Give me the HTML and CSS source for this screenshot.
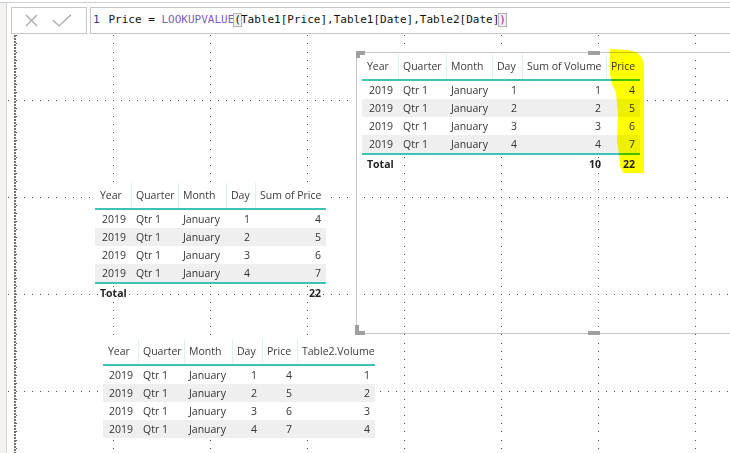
FILE: index.html
```html
<!DOCTYPE html>
<html>
<head>
<meta charset="utf-8">
<title>Power BI LOOKUPVALUE</title>
<link rel="stylesheet" href="styles.css">
</head>
<body>
<div class="app">
  <div class="side-strip"></div>
  <div class="main">
    <div class="formula-bar">
      <div class="fx-buttons">
        <svg class="icon-x" width="13" height="13" viewBox="0 0 13 13"><path d="M1 1 L12 12 M12 1 L1 12" fill="none" stroke="#a8a6a4" stroke-width="1.2"/></svg>
        <svg class="icon-check" width="20" height="13" viewBox="0 0 20 13"><path d="M0.8 6 L7 12 L19 0.8" fill="none" stroke="#a8a6a4" stroke-width="1.2"/></svg>
      </div>
      <div class="formula-input"><span class="ln">1</span><span class="code">Price = <span class="fn">LOOKUPVALUE</span><span class="bracket">(</span>Table1[Price],Table1[Date],Table2[Date]<span class="bracket close">)</span></span></div>
    </div>
    <div class="canvas">
      <svg class="grid" width="730" height="420">
        <defs>
          <pattern id="dots" x="9" y="-32" width="97" height="97" patternUnits="userSpaceOnUse">
            <rect x="0" y="0" width="1" height="1"/>
            <rect x="0" y="8" width="1" height="1"/>
            <rect x="0" y="16" width="1" height="1"/>
            <rect x="0" y="24" width="1" height="1"/>
            <rect x="0" y="32" width="1" height="1"/>
            <rect x="0" y="40" width="1" height="1"/>
            <rect x="0" y="49" width="1" height="1"/>
            <rect x="0" y="57" width="1" height="1"/>
            <rect x="0" y="65" width="1" height="1"/>
            <rect x="0" y="73" width="1" height="1"/>
            <rect x="0" y="81" width="1" height="1"/>
            <rect x="0" y="89" width="1" height="1"/>
            <rect x="8" y="0" width="1" height="1"/>
            <rect x="16" y="0" width="1" height="1"/>
            <rect x="24" y="0" width="1" height="1"/>
            <rect x="32" y="0" width="1" height="1"/>
            <rect x="40" y="0" width="1" height="1"/>
            <rect x="49" y="0" width="1" height="1"/>
            <rect x="57" y="0" width="1" height="1"/>
            <rect x="65" y="0" width="1" height="1"/>
            <rect x="73" y="0" width="1" height="1"/>
            <rect x="81" y="0" width="1" height="1"/>
            <rect x="89" y="0" width="1" height="1"/>
          </pattern>
        </defs>
        <rect x="0" y="0" width="730" height="420" fill="url(#dots)"/>
      </svg>
      <div class="page-edge"></div>

      <div class="visual-frame">
        <table class="tbl tbl-a">
          <colgroup><col class="a1"><col class="a2"><col class="a3"><col class="a4"><col class="a5"><col class="a6"></colgroup>
          <thead><tr><th>Year</th><th>Quarter</th><th>Month</th><th>Day</th><th>Sum of Volume</th><th>Price</th></tr></thead>
          <tbody>
            <tr><td class="num">2019</td><td>Qtr 1</td><td>January</td><td class="num">1</td><td class="num">1</td><td class="num">4</td></tr>
            <tr><td class="num">2019</td><td>Qtr 1</td><td>January</td><td class="num">2</td><td class="num">2</td><td class="num">5</td></tr>
            <tr><td class="num">2019</td><td>Qtr 1</td><td>January</td><td class="num">3</td><td class="num">3</td><td class="num">6</td></tr>
            <tr><td class="num">2019</td><td>Qtr 1</td><td>January</td><td class="num">4</td><td class="num">4</td><td class="num">7</td></tr>
          </tbody>
          <tfoot><tr><td>Total</td><td></td><td></td><td></td><td class="num">10</td><td class="num">22</td></tr></tfoot>
        </table>
        <span class="handle h-tl-a"></span><span class="handle h-tl-b"></span>
        <span class="handle h-tm"></span>
        <span class="handle h-bl-a"></span><span class="handle h-bl-b"></span>
        <span class="handle h-bm"></span>
      </div>

      <table class="tbl tbl-b">
        <colgroup><col class="b1"><col class="b2"><col class="b3"><col class="b4"><col class="b5"></colgroup>
        <thead><tr><th>Year</th><th>Quarter</th><th>Month</th><th>Day</th><th>Sum of Price</th></tr></thead>
        <tbody>
          <tr><td class="num">2019</td><td>Qtr 1</td><td>January</td><td class="num">1</td><td class="num">4</td></tr>
          <tr><td class="num">2019</td><td>Qtr 1</td><td>January</td><td class="num">2</td><td class="num">5</td></tr>
          <tr><td class="num">2019</td><td>Qtr 1</td><td>January</td><td class="num">3</td><td class="num">6</td></tr>
          <tr><td class="num">2019</td><td>Qtr 1</td><td>January</td><td class="num">4</td><td class="num">7</td></tr>
        </tbody>
        <tfoot><tr><td>Total</td><td></td><td></td><td></td><td class="num">22</td></tr></tfoot>
      </table>

      <table class="tbl tbl-c">
        <colgroup><col class="c1"><col class="c2"><col class="c3"><col class="c4"><col class="c5"><col class="c6"></colgroup>
        <thead><tr><th>Year</th><th>Quarter</th><th>Month</th><th>Day</th><th>Price</th><th>Table2.Volume</th></tr></thead>
        <tbody>
          <tr><td class="num">2019</td><td>Qtr 1</td><td>January</td><td class="num">1</td><td class="num">4</td><td class="num">1</td></tr>
          <tr><td class="num">2019</td><td>Qtr 1</td><td>January</td><td class="num">2</td><td class="num">5</td><td class="num">2</td></tr>
          <tr><td class="num">2019</td><td>Qtr 1</td><td>January</td><td class="num">3</td><td class="num">6</td><td class="num">3</td></tr>
          <tr><td class="num">2019</td><td>Qtr 1</td><td>January</td><td class="num">4</td><td class="num">7</td><td class="num">4</td></tr>
        </tbody>
      </table>

      <svg class="highlight" width="42" height="128" viewBox="0 0 42 128">
        <path d="M7 2 L24 3 L32 5 L37 10 L39 18 L39 124 L20 124 L17 118 L16 107 L14 92 L15 67 L13 44 L9 36 L7 26 L7 10 Z" fill="#ffff00" stroke="#ffff00" stroke-width="2" stroke-linejoin="round"/>
      </svg>
    </div>
  </div>
</div>
</body>
</html>
```

FILE: styles.css
```css
* { box-sizing: border-box; }
html, body { margin: 0; padding: 0; }
body {
  width: 730px;
  height: 453px;
  overflow: hidden;
  background: #ffffff;
  font-family: "Open Sans", "Noto Sans", sans-serif;
}
.app {
  display: flex;
  height: 451px;
  margin-top: 2px;
  border-top: 1px solid #cfcdcb;
}
.side-strip {
  flex: none;
  width: 7px;
  background: #f3f2f1;
  border-right: 1px solid #d6d4d2;
}
.main {
  flex: 1;
  min-width: 0;
  display: flex;
  flex-direction: column;
}
.formula-bar {
  flex: none;
  height: 32px;
  display: flex;
  align-items: flex-start;
  gap: 3px;
  padding: 4px 0 0 4px;
  background: #ffffff;
}
.fx-buttons {
  flex: none;
  width: 76px;
  height: 27px;
  border: 1px solid #c8c6c4;
  display: flex;
  align-items: center;
  gap: 14px;
  padding-left: 13px;
}
.icon-x, .icon-check { display: block; }
.formula-input {
  flex: 1;
  height: 27px;
  border: 1px solid #c8c6c4;
  border-right: none;
  padding-left: 2px;
  font-family: "DejaVu Sans Mono", "Liberation Mono", monospace;
  font-size: 11px;
  line-height: 23px;
  white-space: nowrap;
  color: #111111;
}
.ln {
  display: inline-block;
  width: 15.5px;
  color: #1f3f8f;
}
.fn { color: #7b5cc4; }
.bracket {
  outline: 1px solid #b4b4b4;
  background: #f0f0f0;
  line-height: 12px;
  display: inline-block;
}
.bracket.close { color: #8a3596; }

.canvas {
  flex: 1;
  position: relative;
  overflow: hidden;
  background: #ffffff;
  isolation: isolate;
}
.grid {
  position: absolute;
  left: 0;
  top: 0;
  fill: #4a4a4a;
  shape-rendering: crispEdges;
}
.page-edge {
  position: absolute;
  left: 7px;
  top: 0;
  bottom: 0;
  width: 2px;
  background: repeating-linear-gradient(to bottom, #727272 0, #727272 2px, transparent 2px, transparent 3px);
}

.visual-frame {
  position: absolute;
  left: 349px;
  top: 17px;
  width: 420px;
  height: 282px;
  border: 1px solid #c8c6c4;
  padding: 1px 0 0 5px;
}
.handle {
  position: absolute;
  background: #a19f9d;
}
.h-tl-a { left: -1px; top: -2px; width: 9px; height: 4px; }
.h-tl-b { left: -1px; top: -2px; width: 4px; height: 7px; }
.h-tm { left: 231px; top: -2px; width: 12px; height: 4px; }
.h-bl-a { left: -2px; top: 272px; width: 4px; height: 10px; }
.h-bl-b { left: -2px; top: 278px; width: 10px; height: 4px; }
.h-bm { left: 231px; top: 278px; width: 12px; height: 4px; }

.tbl {
  border-collapse: separate;
  border-spacing: 0;
  table-layout: fixed;
  font-size: 10.5px;
  color: #333333;
}
.tbl th {
  font-weight: normal;
  text-align: left;
  line-height: 25px;
  padding: 0 0 0 5px;
  border-bottom: 2px solid #3fc2b6;
  background: #ffffff;
  white-space: nowrap;
  color: #3b3a39;
}
.tbl th + th { box-shadow: inset 1px 0 0 #def1ef; }
.tbl td {
  line-height: 18px;
  padding: 0 5px;
  white-space: nowrap;
  background: #ffffff;
}
.tbl tbody tr:nth-child(even) td { background: #efefef; }
.tbl .num { text-align: right; }
.tbl tfoot td {
  background: transparent;
  border-top: 2px solid #3fc2b6;
  font-weight: bold;
  color: #252423;
}

.tbl-a { width: 278px; }
.a1 { width: 36px; } .a2 { width: 48px; } .a3 { width: 46px; }
.a4 { width: 30px; } .a5 { width: 84px; } .a6 { width: 34px; }

.tbl-b { position: absolute; left: 88px; top: 148px; width: 231px; }
.b1 { width: 36px; } .b2 { width: 47px; } .b3 { width: 48px; }
.b4 { width: 29px; } .b5 { width: 71px; }

.tbl-c { position: absolute; left: 96px; top: 304px; width: 272px; }
.c1 { width: 35px; } .c2 { width: 46px; } .c3 { width: 48px; }
.c4 { width: 30px; } .c5 { width: 35px; } .c6 { width: 78px; }

.highlight {
  position: absolute;
  left: 597px;
  top: 13px;
  mix-blend-mode: multiply;
}
```
